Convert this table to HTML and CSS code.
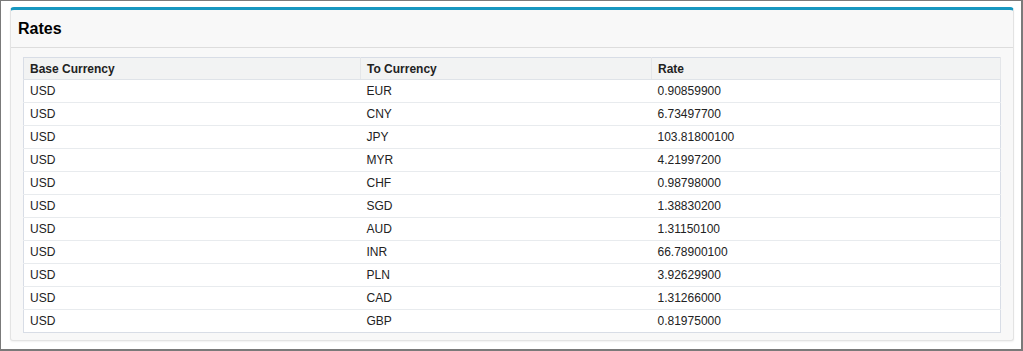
FILE: index.html
```html
<!DOCTYPE html>
<html>
<head>
<meta charset="utf-8">
<link rel="stylesheet" href="styles.css">
</head>
<body>
<div class="frame">
  <div class="panel">
    <div class="panel-head"><h2 class="title">Rates</h2></div>
    <div class="panel-body">
      <table class="rates">
        <colgroup><col class="c1"><col class="c2"><col class="c3"></colgroup>
        <thead>
          <tr><th>Base Currency</th><th>To Currency</th><th>Rate</th></tr>
        </thead>
        <tbody>
          <tr><td>USD</td><td>EUR</td><td>0.90859900</td></tr>
          <tr><td>USD</td><td>CNY</td><td>6.73497700</td></tr>
          <tr><td>USD</td><td>JPY</td><td>103.81800100</td></tr>
          <tr><td>USD</td><td>MYR</td><td>4.21997200</td></tr>
          <tr><td>USD</td><td>CHF</td><td>0.98798000</td></tr>
          <tr><td>USD</td><td>SGD</td><td>1.38830200</td></tr>
          <tr><td>USD</td><td>AUD</td><td>1.31150100</td></tr>
          <tr><td>USD</td><td>INR</td><td>66.78900100</td></tr>
          <tr><td>USD</td><td>PLN</td><td>3.92629900</td></tr>
          <tr><td>USD</td><td>CAD</td><td>1.31266000</td></tr>
          <tr><td>USD</td><td>GBP</td><td>0.81975000</td></tr>
        </tbody>
      </table>
    </div>
  </div>
</div>
</body>
</html>
```
FILE: styles.css
```css
html, body { margin: 0; padding: 0; background: #fff; }
body { font-family: "Liberation Sans", Arial, sans-serif; color: #222; }
.frame {
  box-sizing: border-box;
  width: 1023px;
  height: 351px;
  border: 1px solid #7a7a7a;
  border-width: 1px 2px 2px 1px;
  padding: 6px 8px 0 9px;
  background: #fff;
}
.panel {
  box-sizing: border-box;
  width: 1004px;
  height: 334px;
  background: #f8f8f8;
  border: 1px solid #e3e3e3;
  border-top: 3px solid #1797c0;
  border-radius: 4px 4px 3px 3px;
  box-shadow: 0 1px 2px rgba(0,0,0,0.06);
}
.panel-head {
  height: 37px;
  border-bottom: 1px solid #dddddd;
  display: flex;
  align-items: center;
  padding-left: 7px;
}
.title {
  margin: 0;
  font-size: 16px;
  font-weight: bold;
  color: #000;
}
.panel-body {
  padding: 9px 12px 0 12px;
}
.rates {
  width: 977px;
  border-collapse: collapse;
  table-layout: fixed;
  background: #fff;
  border: 1px solid #d8dde6;
  font-size: 12px;
}
.c1 { width: 337px; }
.c2 { width: 291px; }
.c3 { width: 349px; }
.rates th {
  height: 22px;
  padding: 0 6px;
  text-align: left;
  font-weight: bold;
  background: #f2f3f3;
  color: #222;
  border-bottom: 1px solid #dfe3e8;
  border-right: 1px solid #e4e6e9;
  box-sizing: border-box;
}
.rates td {
  height: 23px;
  padding: 0 6px;
  border-bottom: 1px solid #e8ebee;
  color: #222;
  box-sizing: border-box;
}
.rates tbody tr:last-child td { border-bottom: none; }
```
